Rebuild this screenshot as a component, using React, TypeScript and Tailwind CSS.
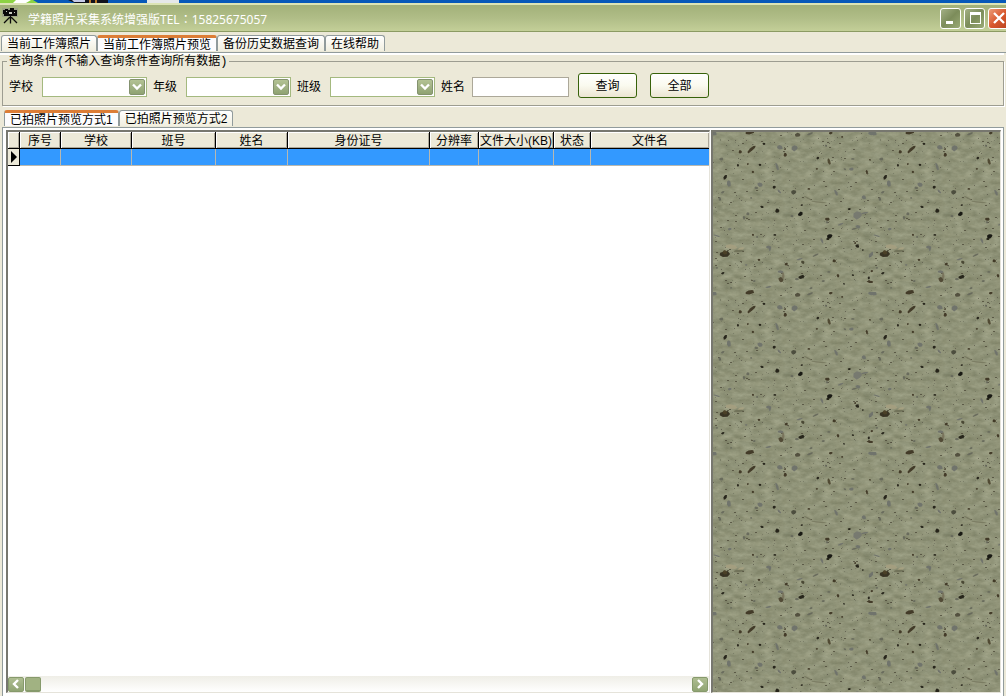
import React from "react";

type Speck = [number, number, number, number, number, string];

// Stone tile, 160 units square: x, y, radius x, radius y, rotation, colour
const dark = "#1c1911";
const brown = "#3a311f";
const grey = "#65675a";
const slate = "#6d706b";
const SPECKS: Speck[] = [
  [37, 0, 4.5, 1.8, -15, brown], [37, 160, 4.5, 1.8, -15, brown], [39, 17, 4.8, 1.6, -42, brown],
  [51, 12, 1.3, 1, 0, dark], [27, 20, 1.6, 1.5, 0, brown], [8, 27, 1.8, 1.4, 0, grey],
  [67, 15, 2.8, 2, 0, slate], [82, 16, 3, 2.6, 0, slate], [85, 3, 2.4, 2, 0, "#4b4837"],
  [97, 2, 3, 1, -25, grey], [72, 23, 1.6, 1.7, 0, brown], [72, 17, 0.8, 0.8, 0, brown],
  [25, 33, 1.1, 1.2, 0, dark], [35, 32, 0.9, 0.9, 0, brown], [40, 40, 1, 1.2, 0, brown],
  [47, 33, 1.2, 1, 0, dark], [64, 35, 1.2, 3.4, -18, slate], [12, 45, 1.3, 2.4, 22, dark],
  [16, 51, 2, 3, 0, slate], [10, 60, 1.8, 1, -20, grey], [7, 67, 1.1, 2, -12, grey],
  [47, 53, 2.4, 2, 0, slate], [43, 56, 1.9, 1.1, 0, grey], [61, 55, 1.3, 1.4, 20, dark],
  [66, 59, 1, 2.4, -38, slate], [81, 60, 2.5, 2.1, 0, "#454638"], [96, 57, 1.2, 0.9, 0, brown],
  [49, 75, 1.6, 1.1, 10, dark], [64, 79, 2, 1.8, 0, dark], [87, 82, 2.3, 1.8, -30, "#0b0b08"],
  [79, 84, 1.5, 1.1, 0, grey], [89, 73, 1.2, 0.7, 0, dark], [35, 82, 1.3, 1.6, 0, grey],
  [31, 86, 1, 1.9, 0, grey], [38, 66, 1, 0.8, 0, grey], [114, 87, 2, 1.4, 10, brown],
  [114, 90, 1, 1.2, 0, grey], [145, 83, 4.2, 3.6, 0, "#75776f"], [152, 81, 3.2, 0.9, -10, slate],
  [145, 95, 2.2, 1.7, 0, slate], [141, 97, 2.8, 0.7, -15, grey], [136, 77, 1.3, 0.9, 0, dark],
  [151, 65, 2.1, 1.8, 0, slate], [117, 104, 2.7, 2, -15, "#0b0b08"], [115, 107, 1.3, 1.2, 0, dark],
  [109, 109, 1, 2.7, -18, slate], [144, 114, 1.9, 1.4, 35, dark], [142, 111, 0.8, 1, 0, brown],
  [56, 115, 2.7, 1.5, 0, slate], [57, 117, 1, 1.8, 0, slate], [19, 115, 5.2, 2.2, 8, "#a69f80"],
  [28, 117, 3, 1.2, -20, "#a9a282"], [25, 119, 5, 1.1, -4, "#6f7058"], [11, 122, 4.5, 2.8, 0, "#30291a"],
  [12, 120, 2.2, 2, 0, "#4c4027"], [17, 97, 1.8, 1.2, 0, slate], [62, 103, 1.3, 0.9, 0, dark],
  [40, 103, 1, 1, 0, brown], [44, 105, 0.9, 1, 0, grey], [73, 132, 1.4, 1.3, 0, brown],
  [90, 130, 1.8, 1.4, 20, "#403e2b"], [87, 127, 3.2, 0.8, -15, slate], [68, 140, 2.7, 1.5, 10, slate],
  [68, 148, 2.2, 2.4, 0, "#4a432f"], [70, 144, 1.2, 3, 0, "#77715a"], [88, 145, 2.8, 1.6, -12, dark],
  [84, 147, 2, 1, 0, grey], [10, 141, 1.7, 1, -20, dark], [4, 136, 1.1, 0.8, 0, grey],
  [46, 128, 1.2, 1, 0, brown], [33, 133, 1, 0.8, 0, slate], [41, 149, 1.2, 1, 0, grey],
  [140, 143, 1.2, 0.8, 0, dark], [159, 139, 1.2, 1, 0, brown], [156, 146, 0.9, 1.5, 0, dark],
  [157, 150, 3, 1.1, 3, brown], [158, 123, 3.6, 1.4, -48, slate], [159, 1, 4, 2, 0, slate],
  [1, 1, 3, 2, 0, slate], [118, 1, 1.8, 1.2, 0, brown], [116, 140, 1.4, 1, 0, grey],
  [125, 144, 1.2, 1.6, 0, brown], [121, 129, 1.7, 1.3, 0, brown], [110, 149, 1.4, 1, 0, grey],
  [116, 29, 1.4, 3, -12, "#49412b"], [105, 26, 1.3, 1.2, 0, dark], [104, 37, 1, 0.8, 0, brown],
  [113, 14, 0.9, 1.2, 0, grey], [129, 5, 1, 0.8, 0, brown], [138, 37, 2, 1.4, 0, slate],
  [132, 37, 1.3, 0.8, 20, grey], [154, 40, 1, 2.1, -15, brown], [140, 27, 1.6, 1, 0, grey],
  [157, 28, 0.8, 0.8, 0, brown], [123, 61, 1.2, 2.8, -25, slate], [105, 70, 7, 0.7, 6, "#78795f"],
  [95, 66, 4.5, 0.7, 28, "#77785f"], [150, 118, 0.8, 0.8, 0, dark], [103, 123, 3, 0.8, -25, grey],
  [131, 152, 0.8, 0.9, 0, dark], [18, 156, 1, 0.7, 0, grey], [55, 155, 2.5, 0.8, -10, slate],
  [98, 156, 1.6, 0.9, -25, grey], [128, 92, 3, 0.7, -20, slate], [4, 104, 3, 0.7, 20, slate],
];

// Seven-cornered chip of stone with uneven edges
function chip([x, y, rx, ry]: Speck, seed: number) {
  return Array.from({ length: 7 }, (_, k) => {
    const a = (k / 7) * Math.PI * 2;
    const r = 0.85 + ((seed * 7 + k * 5) % 6) * 0.1;
    return `${(x + Math.cos(a) * rx * r).toFixed(1)},${(y + Math.sin(a) * ry * r).toFixed(1)}`;
  }).join(" ");
}

// Small scattered grains in a repeatable order
function random(n: number) {
  const v = Math.sin(n * 127.1 + 11.7) * 43758.5453;
  return v - Math.floor(v);
}
const GRAINS = Array.from({ length: 420 }, (_, i) => ({
  x: Math.floor(random(i) * 159),
  y: Math.floor(random(i + 500) * 159),
  wide: i % 5 === 0,
  ink: i % 5 === 0 ? "#4a4637" : i % 3 === 0 ? "#5a584a" : "#747661",
}));

function StoneTexture() {
  return (
    <svg className="block min-w-0 flex-1" aria-hidden="true">
      <defs>
        <filter id="grain" x="0" y="0" width="100%" height="100%" colorInterpolationFilters="sRGB">
          <feTurbulence type="fractalNoise" baseFrequency="0.1 0.19" numOctaves="5" seed="7" stitchTiles="stitch" />
          <feColorMatrix values="0.18 0.06 0 0 0.445  0.18 0.05 0 0 0.464  0.18 0.04 0 0 0.363  0 0 0 0 1" />
        </filter>
        <pattern id="stone" width="160" height="160" patternUnits="userSpaceOnUse">
          <rect width="160" height="160" fill="#8e9276" />
          <rect width="160" height="160" filter="url(#grain)" />
          {GRAINS.map((g, i) => (
            <rect key={i} x={g.x} y={g.y} width={g.wide ? 2 : 1} height="1" fill={g.ink} opacity="0.75" />
          ))}
          {SPECKS.map((s, i) => (
            <polygon key={i} points={chip(s, i)} fill={s[5]} opacity="0.9" transform={`rotate(${s[4]} ${s[0]} ${s[1]})`} />
          ))}
        </pattern>
      </defs>
      <rect width="100%" height="100%" fill="url(#stone)" />
    </svg>
  );
}

function Chevron({ direction }: { direction: "down" | "left" | "right" }) {
  const paths = { down: "M2 3.5 6 7.5 10 3.5", left: "M8 2 4 6 8 10", right: "M4 2 8 6 4 10" };
  return (
    <svg viewBox="0 0 12 12" className="h-3 w-3" fill="none" stroke="white" strokeWidth="2.4" aria-hidden="true">
      <path d={paths[direction]} />
    </svg>
  );
}

function Tab({ label, active = false }: { label: string; active?: boolean }) {
  return (
    <button
      role="tab"
      aria-selected={active}
      className={
        active
          ? "h-4 whitespace-nowrap rounded-t-[3px] border border-b-0 border-t-[3px] border-[#919b9c] border-t-[#dc7d36] bg-[#fcfcfe] px-[5px] leading-3"
          : "h-4 whitespace-nowrap rounded-t-[3px] border border-b-0 border-[#919b9c] bg-linear-to-b from-white to-[#f1efe0] px-[5px] leading-4"
      }
    >
      {label}
    </button>
  );
}

function Combo({ id, label }: { id: string; label: string }) {
  return (
    <div className="flex items-center gap-[9px]">
      <label htmlFor={id}>{label}</label>
      <div className="relative">
        <select id={id} className="block h-5 w-[105px] appearance-none border border-[#a4b97f] bg-white" />
        <span className="pointer-events-none absolute right-0.5 top-0.5 flex h-4 w-4 items-center justify-center rounded-[2px] border border-[#84926f] bg-linear-to-b from-[#b3c294] to-[#8fa272]">
          <Chevron direction="down" />
        </span>
      </div>
    </div>
  );
}

function PushButton({ label }: { label: string }) {
  return (
    <button className="mb-0.5 h-[25px] w-[59px] rounded-[3px] border border-[#37620a] bg-linear-to-b from-white via-[#fafaef] to-[#ece5d2]">
      {label}
    </button>
  );
}

function CameraIcon() {
  return (
    <svg viewBox="0 0 16 16" className="-mt-1 h-4 w-4" aria-hidden="true">
      <path fill="#8f948a" d="M0 0h16v9H0z" opacity=".55" />
      <path fill="#0a0a0a" d="M1 2h2V1h3v1h2V0h4v2h3v6H2V6H1z" />
      <path fill="#c8ccc0" d="M7 4h3v2H7zM4 3h1v1H4zM12 4h1v1h-1z" />
      <path fill="none" stroke="#0a0a0a" strokeWidth="1.3" d="M8.5 8v7.5M8.5 8.5 2 15M8.5 8.5 15 15" />
    </svg>
  );
}

const COLUMNS = [
  { title: "序号", width: "w-[41px]" },
  { title: "学校", width: "w-[71px]" },
  { title: "班号", width: "w-[84px]" },
  { title: "姓名", width: "w-[72px]" },
  { title: "身份证号", width: "w-[142px]" },
  { title: "分辨率", width: "w-[49px]" },
  { title: "文件大小(KB)", width: "w-[75px]" },
  { title: "状态", width: "w-[37px]" },
  { title: "文件名", width: "w-[119px]" },
];

const windowButton =
  "flex h-[21px] w-[21px] items-center justify-center rounded-[3px] border border-white bg-linear-to-br from-[#a3b085] via-[#7c8c5a] to-[#9aaa76]";
const scrollButton =
  "flex h-[15px] w-4 items-center justify-center rounded-[2px] border border-[#869a6c] bg-linear-to-b from-[#aebd91] to-[#90a473]";

export default function App() {
  return (
    <div className="flex h-screen flex-col overflow-hidden bg-[#ece9d8] font-['Liberation_Sans','Noto_Sans_CJK_SC',sans-serif] text-xs text-black">
      <svg className="h-[3px] w-full shrink-0 bg-[#0759b9]" aria-hidden="true">
        <path d="M0 0h33l5 3H0z" fill="#8cd343" />
        <path d="M16 0h15l-5 3H13z" fill="#fff" />
        <path d="M68 0h40v3H75z" fill="#10121c" />
        <path d="M72 0h13v2H74z" fill="#c5cbe8" />
        <path d="M89 0h2v3h-2zM95 0h2v3h-2z" fill="#b87826" />
        <path d="M147 0h32v3h-32z" fill="#e5e8e9" />
      </svg>

      <header className="flex h-[29px] shrink-0 items-center justify-between border-b border-t-2 border-b-[#8c9b63] border-t-[#dce4b5] bg-linear-to-b from-[#a2b179] via-[#b0bd87] to-[#c3cf98] pl-0.5">
        <div className="flex items-center gap-[10px]">
          <CameraIcon />
          <h1 className="whitespace-nowrap pt-0.5 font-['Noto_Sans','Noto_Sans_CJK_SC',sans-serif] text-xs text-white">
            学籍照片采集系统增强版TEL<span className="font-['Noto_Sans_CJK_TC',sans-serif]" lang="zh-Hant">：</span>15825675057
          </h1>
        </div>
        <div className="-mr-[3px] flex gap-[3px]">
          <button aria-label="最小化" className={windowButton}>
            <svg viewBox="0 0 18 18" className="h-[18px] w-[18px]"><path d="M4 12h7v3H4z" fill="white" /></svg>
          </button>
          <button aria-label="最大化" className={windowButton}>
            <svg viewBox="0 0 18 18" className="h-[18px] w-[18px]"><path d="M4 3h11v12H4zm1 3v8h9V6z" fill="white" fillRule="evenodd" /></svg>
          </button>
          <button
            aria-label="关闭"
            className="flex h-[21px] w-[21px] items-center justify-center rounded-[3px] border border-white bg-linear-to-br from-[#eb9b77] via-[#d9582d] to-[#b9441f]"
          >
            <svg viewBox="0 0 18 18" className="h-[18px] w-[18px]"><path d="m4 4 10 10M14 4 4 14" stroke="white" strokeWidth="2.3" /></svg>
          </button>
        </div>
      </header>

      <nav role="tablist" className="flex shrink-0 pb-px pl-px pt-[3px]">
        <Tab label="当前工作簿照片" />
        <Tab label="当前工作簿照片预览" active />
        <Tab label="备份历史数据查询" />
        <Tab label="在线帮助" />
      </nav>

      <main className="flex min-h-0 flex-1 flex-col border-t border-[#919b9c] pr-0.5">
        <div className="h-0.5 shrink-0 bg-white" />
        <fieldset className="ml-0.5 h-[51px] shrink-0 border border-[#9d9d91] shadow-[1px_1px_0_#fff]">
          <legend className="ml-1 h-3 whitespace-nowrap px-0.5 font-['Liberation_Mono','Noto_Sans_CJK_SC',monospace] leading-[14px]">
            查询条件(不输入查询条件查询所有数据)
          </legend>
          <div className="flex items-center gap-[6px] pl-[6px] pt-[6px]">
            <Combo id="school" label="学校" />
            <Combo id="grade" label="年级" />
            <Combo id="class" label="班级" />
            <div className="flex items-center gap-[7px]">
              <label htmlFor="name">姓名</label>
              <input id="name" type="text" className="h-5 w-[97px] border border-[#aca899] bg-white px-1" />
            </div>
            <div className="flex gap-[13px] pl-[3px]">
              <PushButton label="查询" />
              <PushButton label="全部" />
            </div>
          </div>
        </fieldset>

        <nav role="tablist" className="flex shrink-0 pb-px pl-1 pt-1">
          <Tab label="已拍照片预览方式1" active />
          <Tab label="已拍照片预览方式2" />
        </nav>

        <section className="ml-0.5 flex min-h-0 flex-1 gap-px border border-b-0 border-[#919b9c] bg-white pb-[3px] pl-[3px] pr-0.5 pt-0.5">
          <div className="flex w-[704px] shrink-0 flex-col border-b border-l-2 border-r border-t-2 border-b-[#e5e3da] border-l-[#77776f] border-r-[#e5e3da] border-t-[#77776f] bg-white">
            <div className="min-h-0 flex-1 overflow-hidden">
              <table className="w-full table-fixed border-separate border-spacing-0">
                <colgroup>
                  <col className="w-3" />
                  {COLUMNS.map((c) => (
                    <col key={c.title} className={c.width} />
                  ))}
                </colgroup>
                <thead>
                  <tr className="h-[17px]">
                    <th aria-label="当前行" className="border-b border-r border-black bg-[#ece9d8] p-0 shadow-[inset_1px_1px_0_#fff,inset_-1px_-1px_0_#aca899]" />
                    {COLUMNS.map((c) => (
                      <th
                        key={c.title}
                        className="whitespace-nowrap border-b border-r border-black bg-[#ece9d8] p-0 pt-0.5 text-center font-normal leading-[14px] shadow-[inset_1px_1px_0_#fff,inset_-1px_-1px_0_#aca899] last:border-r-[#aca899]"
                      >
                        {c.title}
                      </th>
                    ))}
                  </tr>
                </thead>
                <tbody>
                  <tr className="h-[17px]">
                    <td className="border-b border-r border-black bg-[#ece9d8] p-0">
                      <svg viewBox="0 0 11 14" className="h-[14px] w-[11px]" aria-hidden="true">
                        <path d="M3 1v12l6-6z" fill="black" />
                      </svg>
                    </td>
                    {COLUMNS.map((c) => (
                      <td key={c.title} className="border-b border-r border-[#b8b8b0] bg-[#3399ff] p-0 last:border-r-[#3399ff]" />
                    ))}
                  </tr>
                </tbody>
              </table>
            </div>
            <div className="flex h-4 shrink-0 items-center gap-px bg-linear-to-b from-[#efeee7] to-white pr-px">
              <button aria-label="向左滚动" className={scrollButton}>
                <Chevron direction="left" />
              </button>
              <div className="h-[15px] w-4 rounded-[2px] border border-b-2 border-[#869a6c] bg-[#a1b282]" />
              <div className="flex-1" />
              <button aria-label="向右滚动" className={scrollButton}>
                <Chevron direction="right" />
              </button>
            </div>
          </div>
          <div className="flex min-w-0 flex-1 border-b border-l-2 border-r border-t-2 border-b-[#e5e3da] border-l-[#77776f] border-r-[#e5e3da] border-t-[#77776f]">
            <StoneTexture />
          </div>
        </section>
      </main>
    </div>
  );
}
